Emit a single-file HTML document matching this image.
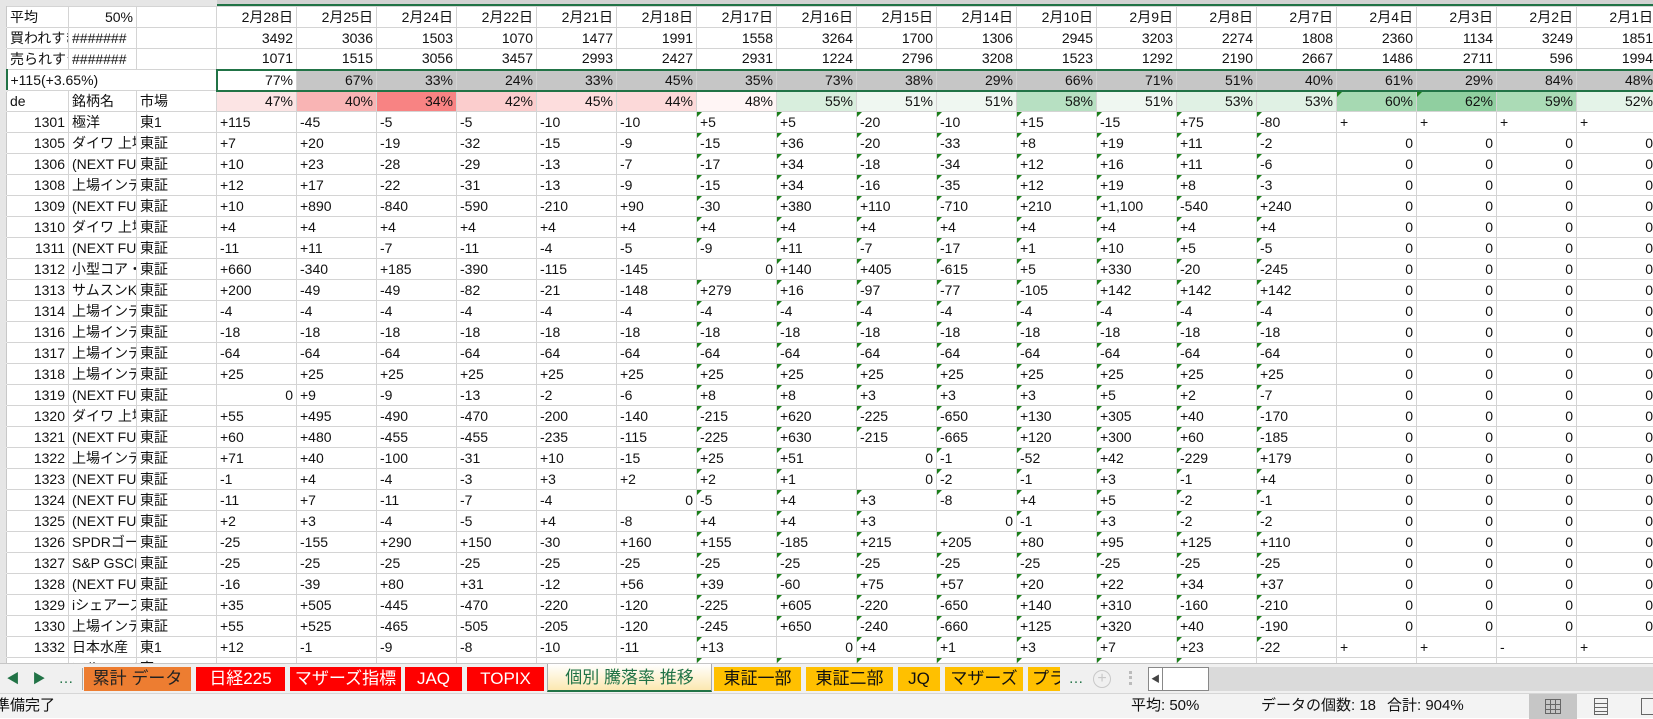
<!DOCTYPE html>
<html><head><meta charset="utf-8">
<style>
*{margin:0;padding:0;box-sizing:border-box}
body{width:1653px;height:718px;overflow:hidden;background:#fff;font-family:"Liberation Sans","Noto Sans CJK JP",sans-serif;font-size:14px;color:#111;position:relative}
#top{position:absolute;left:0;top:0;width:1653px;height:6px;background:#e6e6e6}
#top2{position:absolute;left:217px;top:0;width:1436px;height:6px;background:#d2d2d2;border-bottom:2px solid #217346}
#grid{position:absolute;left:0;top:6px;width:1653px;height:657px;overflow:hidden}
table{border-collapse:collapse;table-layout:fixed;width:1656px}
td{height:21px;border:1px solid #d4d4d4;padding:0 3px;white-space:nowrap;overflow:hidden;line-height:19px;text-align:left;position:relative}
td.h{background:#e6e6e6;border-color:#e6e6e6 #c8c8c8 #e6e6e6 #e6e6e6;padding:0}
td.r{text-align:right}
td.c{border-left:1px solid #9a9a9a}
td.t::before{content:"";position:absolute;left:0;top:0;border-top:5px solid #1a7f1a;border-right:5px solid transparent}
tr.sel td{background:#c6c6c6;text-align:right;border-top:2px solid #217346;border-bottom:2px solid #217346}
tr.sel td.w{background:#fff}
tr.sel td.h{background:#e6e6e6;border-right:2px solid #217346;border-top-color:#e6e6e6;border-bottom-color:#e6e6e6}
tr.sel td.a{background:#fff;text-align:left;border-top:1px solid #d4d4d4;border-bottom:1px solid #d4d4d4}
#tabs{position:absolute;left:0;top:663px;width:1653px;height:30px;background:#f0f0f0;border-top:1px solid #c6c6c6}
.tab{position:absolute;top:3px;height:24px;font-size:17px;line-height:24px;text-align:center;white-space:nowrap;overflow:hidden}
#status{position:absolute;left:0;top:693px;width:1653px;height:25px;background:#f3f3f3;border-top:1px solid #d6d6d6;font-size:15px;line-height:24px}
#status span{position:absolute}
</style></head><body>
<div id="top"></div><div id="top2"></div>
<div id="grid"><table>
<colgroup><col style="width:6px"><col style="width:62px"><col style="width:68px"><col style="width:80px"><col span="18" style="width:80px"></colgroup>
<tr><td class="h"></td><td>平均</td><td class="r">50%</td><td></td><td class="r c">2月28日</td><td class="r">2月25日</td><td class="r">2月24日</td><td class="r">2月22日</td><td class="r">2月21日</td><td class="r">2月18日</td><td class="r">2月17日</td><td class="r">2月16日</td><td class="r">2月15日</td><td class="r">2月14日</td><td class="r">2月10日</td><td class="r">2月9日</td><td class="r">2月8日</td><td class="r">2月7日</td><td class="r">2月4日</td><td class="r">2月3日</td><td class="r">2月2日</td><td class="r">2月1日</td></tr>
<tr><td class="h"></td><td>買われすぎ</td><td>#######</td><td></td><td class="r c">3492</td><td class="r">3036</td><td class="r">1503</td><td class="r">1070</td><td class="r">1477</td><td class="r">1991</td><td class="r">1558</td><td class="r">3264</td><td class="r">1700</td><td class="r">1306</td><td class="r">2945</td><td class="r">3203</td><td class="r">2274</td><td class="r">1808</td><td class="r">2360</td><td class="r">1134</td><td class="r">3249</td><td class="r">1851</td></tr>
<tr><td class="h"></td><td>売られすぎ</td><td>#######</td><td></td><td class="r c">1071</td><td class="r">1515</td><td class="r">3056</td><td class="r">3457</td><td class="r">2993</td><td class="r">2427</td><td class="r">2931</td><td class="r">1224</td><td class="r">2796</td><td class="r">3208</td><td class="r">1523</td><td class="r">1292</td><td class="r">2190</td><td class="r">2667</td><td class="r">1486</td><td class="r">2711</td><td class="r">596</td><td class="r">1994</td></tr>
<tr class="sel"><td class="h"></td><td class="a" colspan="3" style="overflow:visible">+115(+3.65%)</td><td class="w" style="border-left:2px solid #217346">77%</td><td>67%</td><td>33%</td><td>24%</td><td>33%</td><td>45%</td><td>35%</td><td>73%</td><td>38%</td><td>29%</td><td>66%</td><td>71%</td><td>51%</td><td>40%</td><td>61%</td><td>29%</td><td>84%</td><td>48%</td></tr>
<tr><td class="h"></td><td>de</td><td>銘柄名</td><td>市場</td><td class="r c" style="background:#fce4e4">47%</td><td class="r" style="background:#f9b4b4">40%</td><td class="r" style="background:#f88383">34%</td><td class="r" style="background:#fbcdcd">42%</td><td class="r" style="background:#fddddd">45%</td><td class="r" style="background:#fcd9d9">44%</td><td class="r" style="background:#fff5f5">48%</td><td class="r" style="background:#d8eedd">55%</td><td class="r" style="background:#eff7f1">51%</td><td class="r" style="background:#eff7f1">51%</td><td class="r" style="background:#b7e0c2">58%</td><td class="r" style="background:#eff7f1">51%</td><td class="r" style="background:#e0f1e4">53%</td><td class="r" style="background:#e0f1e4">53%</td><td class="r t" style="background:#a6d9b2">60%</td><td class="r t" style="background:#90cfa0">62%</td><td class="r" style="background:#abdbb6">59%</td><td class="r" style="background:#e4f3e8">52%</td></tr>
<tr><td class="h"></td><td class="r">1301</td><td>極洋</td><td>東1</td><td class="c">+115</td><td>-45</td><td>-5</td><td>-5</td><td>-10</td><td>-10</td><td class="t">+5</td><td class="t">+5</td><td class="t">-20</td><td class="t">-10</td><td class="t">+15</td><td class="t">-15</td><td class="t">+75</td><td class="t">-80</td><td>+</td><td>+</td><td>+</td><td>+</td></tr>
<tr><td class="h"></td><td class="r">1305</td><td>ダイワ 上場</td><td>東証</td><td class="c">+7</td><td>+20</td><td>-19</td><td>-32</td><td>-15</td><td>-9</td><td class="t">-15</td><td class="t">+36</td><td class="t">-20</td><td class="t">-33</td><td class="t">+8</td><td class="t">+19</td><td class="t">+11</td><td class="t">-2</td><td class="r">0</td><td class="r">0</td><td class="r">0</td><td class="r">0</td></tr>
<tr><td class="h"></td><td class="r">1306</td><td>(NEXT FUNDS</td><td>東証</td><td class="c">+10</td><td>+23</td><td>-28</td><td>-29</td><td>-13</td><td>-7</td><td class="t">-17</td><td class="t">+34</td><td class="t">-18</td><td class="t">-34</td><td class="t">+12</td><td class="t">+16</td><td class="t">+11</td><td class="t">-6</td><td class="r">0</td><td class="r">0</td><td class="r">0</td><td class="r">0</td></tr>
<tr><td class="h"></td><td class="r">1308</td><td>上場インデ</td><td>東証</td><td class="c">+12</td><td>+17</td><td>-22</td><td>-31</td><td>-13</td><td>-9</td><td class="t">-15</td><td class="t">+34</td><td class="t">-16</td><td class="t">-35</td><td class="t">+12</td><td class="t">+19</td><td class="t">+8</td><td class="t">-3</td><td class="r">0</td><td class="r">0</td><td class="r">0</td><td class="r">0</td></tr>
<tr><td class="h"></td><td class="r">1309</td><td>(NEXT FUNDS</td><td>東証</td><td class="c">+10</td><td>+890</td><td>-840</td><td>-590</td><td>-210</td><td>+90</td><td class="t">-30</td><td class="t">+380</td><td class="t">+110</td><td class="t">-710</td><td class="t">+210</td><td class="t">+1,100</td><td class="t">-540</td><td class="t">+240</td><td class="r">0</td><td class="r">0</td><td class="r">0</td><td class="r">0</td></tr>
<tr><td class="h"></td><td class="r">1310</td><td>ダイワ 上場</td><td>東証</td><td class="c">+4</td><td>+4</td><td>+4</td><td>+4</td><td>+4</td><td>+4</td><td class="t">+4</td><td class="t">+4</td><td class="t">+4</td><td class="t">+4</td><td class="t">+4</td><td class="t">+4</td><td class="t">+4</td><td class="t">+4</td><td class="r">0</td><td class="r">0</td><td class="r">0</td><td class="r">0</td></tr>
<tr><td class="h"></td><td class="r">1311</td><td>(NEXT FUNDS</td><td>東証</td><td class="c">-11</td><td>+11</td><td>-7</td><td>-11</td><td>-4</td><td>-5</td><td class="t">-9</td><td class="t">+11</td><td class="t">-7</td><td class="t">-17</td><td class="t">+1</td><td class="t">+10</td><td class="t">+5</td><td class="t">-5</td><td class="r">0</td><td class="r">0</td><td class="r">0</td><td class="r">0</td></tr>
<tr><td class="h"></td><td class="r">1312</td><td>小型コア・</td><td>東証</td><td class="c">+660</td><td>-340</td><td>+185</td><td>-390</td><td>-115</td><td>-145</td><td class="r">0</td><td class="t">+140</td><td class="t">+405</td><td class="t">-615</td><td class="t">+5</td><td class="t">+330</td><td class="t">-20</td><td class="t">-245</td><td class="r">0</td><td class="r">0</td><td class="r">0</td><td class="r">0</td></tr>
<tr><td class="h"></td><td class="r">1313</td><td>サムスンKODEX</td><td>東証</td><td class="c">+200</td><td>-49</td><td>-49</td><td>-82</td><td>-21</td><td>-148</td><td class="t">+279</td><td class="t">+16</td><td class="t">-97</td><td class="t">-77</td><td class="t">-105</td><td class="t">+142</td><td class="t">+142</td><td class="t">+142</td><td class="r">0</td><td class="r">0</td><td class="r">0</td><td class="r">0</td></tr>
<tr><td class="h"></td><td class="r">1314</td><td>上場インデ</td><td>東証</td><td class="c">-4</td><td>-4</td><td>-4</td><td>-4</td><td>-4</td><td>-4</td><td class="t">-4</td><td class="t">-4</td><td class="t">-4</td><td class="t">-4</td><td class="t">-4</td><td class="t">-4</td><td class="t">-4</td><td class="t">-4</td><td class="r">0</td><td class="r">0</td><td class="r">0</td><td class="r">0</td></tr>
<tr><td class="h"></td><td class="r">1316</td><td>上場インデ</td><td>東証</td><td class="c">-18</td><td>-18</td><td>-18</td><td>-18</td><td>-18</td><td>-18</td><td class="t">-18</td><td class="t">-18</td><td class="t">-18</td><td class="t">-18</td><td class="t">-18</td><td class="t">-18</td><td class="t">-18</td><td class="t">-18</td><td class="r">0</td><td class="r">0</td><td class="r">0</td><td class="r">0</td></tr>
<tr><td class="h"></td><td class="r">1317</td><td>上場インデ</td><td>東証</td><td class="c">-64</td><td>-64</td><td>-64</td><td>-64</td><td>-64</td><td>-64</td><td class="t">-64</td><td class="t">-64</td><td class="t">-64</td><td class="t">-64</td><td class="t">-64</td><td class="t">-64</td><td class="t">-64</td><td class="t">-64</td><td class="r">0</td><td class="r">0</td><td class="r">0</td><td class="r">0</td></tr>
<tr><td class="h"></td><td class="r">1318</td><td>上場インデ</td><td>東証</td><td class="c">+25</td><td>+25</td><td>+25</td><td>+25</td><td>+25</td><td>+25</td><td class="t">+25</td><td class="t">+25</td><td class="t">+25</td><td class="t">+25</td><td class="t">+25</td><td class="t">+25</td><td class="t">+25</td><td class="t">+25</td><td class="r">0</td><td class="r">0</td><td class="r">0</td><td class="r">0</td></tr>
<tr><td class="h"></td><td class="r">1319</td><td>(NEXT FUNDS</td><td>東証</td><td class="r c">0</td><td>+9</td><td>-9</td><td>-13</td><td>-2</td><td>-6</td><td class="t">+8</td><td class="t">+8</td><td class="t">+3</td><td class="t">+3</td><td class="t">+3</td><td class="t">+5</td><td class="t">+2</td><td class="t">-7</td><td class="r">0</td><td class="r">0</td><td class="r">0</td><td class="r">0</td></tr>
<tr><td class="h"></td><td class="r">1320</td><td>ダイワ 上場</td><td>東証</td><td class="c">+55</td><td>+495</td><td>-490</td><td>-470</td><td>-200</td><td>-140</td><td class="t">-215</td><td class="t">+620</td><td class="t">-225</td><td class="t">-650</td><td class="t">+130</td><td class="t">+305</td><td class="t">+40</td><td class="t">-170</td><td class="r">0</td><td class="r">0</td><td class="r">0</td><td class="r">0</td></tr>
<tr><td class="h"></td><td class="r">1321</td><td>(NEXT FUNDS</td><td>東証</td><td class="c">+60</td><td>+480</td><td>-455</td><td>-455</td><td>-235</td><td>-115</td><td class="t">-225</td><td class="t">+630</td><td class="t">-215</td><td class="t">-665</td><td class="t">+120</td><td class="t">+300</td><td class="t">+60</td><td class="t">-185</td><td class="r">0</td><td class="r">0</td><td class="r">0</td><td class="r">0</td></tr>
<tr><td class="h"></td><td class="r">1322</td><td>上場インデ</td><td>東証</td><td class="c">+71</td><td>+40</td><td>-100</td><td>-31</td><td>+10</td><td>-15</td><td class="t">+25</td><td class="t">+51</td><td class="r">0</td><td class="t">-1</td><td class="t">-52</td><td class="t">+42</td><td class="t">-229</td><td class="t">+179</td><td class="r">0</td><td class="r">0</td><td class="r">0</td><td class="r">0</td></tr>
<tr><td class="h"></td><td class="r">1323</td><td>(NEXT FUNDS</td><td>東証</td><td class="c">-1</td><td>+4</td><td>-4</td><td>-3</td><td>+3</td><td>+2</td><td class="t">+2</td><td class="t">+1</td><td class="r">0</td><td class="t">-2</td><td class="t">-1</td><td class="t">+3</td><td class="t">-1</td><td class="t">+4</td><td class="r">0</td><td class="r">0</td><td class="r">0</td><td class="r">0</td></tr>
<tr><td class="h"></td><td class="r">1324</td><td>(NEXT FUNDS</td><td>東証</td><td class="c">-11</td><td>+7</td><td>-11</td><td>-7</td><td>-4</td><td class="r">0</td><td class="t">-5</td><td class="t">+4</td><td class="t">+3</td><td class="t">-8</td><td class="t">+4</td><td class="t">+5</td><td class="t">-2</td><td class="t">-1</td><td class="r">0</td><td class="r">0</td><td class="r">0</td><td class="r">0</td></tr>
<tr><td class="h"></td><td class="r">1325</td><td>(NEXT FUNDS</td><td>東証</td><td class="c">+2</td><td>+3</td><td>-4</td><td>-5</td><td>+4</td><td>-8</td><td class="t">+4</td><td class="t">+4</td><td class="t">+3</td><td class="r">0</td><td class="t">-1</td><td class="t">+3</td><td class="t">-2</td><td class="t">-2</td><td class="r">0</td><td class="r">0</td><td class="r">0</td><td class="r">0</td></tr>
<tr><td class="h"></td><td class="r">1326</td><td>SPDRゴールド</td><td>東証</td><td class="c">-25</td><td>-155</td><td>+290</td><td>+150</td><td>-30</td><td>+160</td><td class="t">+155</td><td class="t">-185</td><td class="t">+215</td><td class="t">+205</td><td class="t">+80</td><td class="t">+95</td><td class="t">+125</td><td class="t">+110</td><td class="r">0</td><td class="r">0</td><td class="r">0</td><td class="r">0</td></tr>
<tr><td class="h"></td><td class="r">1327</td><td>S&amp;P GSCI商</td><td>東証</td><td class="c">-25</td><td>-25</td><td>-25</td><td>-25</td><td>-25</td><td>-25</td><td class="t">-25</td><td class="t">-25</td><td class="t">-25</td><td class="t">-25</td><td class="t">-25</td><td class="t">-25</td><td class="t">-25</td><td class="t">-25</td><td class="r">0</td><td class="r">0</td><td class="r">0</td><td class="r">0</td></tr>
<tr><td class="h"></td><td class="r">1328</td><td>(NEXT FUNDS</td><td>東証</td><td class="c">-16</td><td>-39</td><td>+80</td><td>+31</td><td>-12</td><td>+56</td><td class="t">+39</td><td class="t">-60</td><td class="t">+75</td><td class="t">+57</td><td class="t">+20</td><td class="t">+22</td><td class="t">+34</td><td class="t">+37</td><td class="r">0</td><td class="r">0</td><td class="r">0</td><td class="r">0</td></tr>
<tr><td class="h"></td><td class="r">1329</td><td>iシェアーズ</td><td>東証</td><td class="c">+35</td><td>+505</td><td>-445</td><td>-470</td><td>-220</td><td>-120</td><td class="t">-225</td><td class="t">+605</td><td class="t">-220</td><td class="t">-650</td><td class="t">+140</td><td class="t">+310</td><td class="t">-160</td><td class="t">-210</td><td class="r">0</td><td class="r">0</td><td class="r">0</td><td class="r">0</td></tr>
<tr><td class="h"></td><td class="r">1330</td><td>上場インデ</td><td>東証</td><td class="c">+55</td><td>+525</td><td>-465</td><td>-505</td><td>-205</td><td>-120</td><td class="t">-245</td><td class="t">+650</td><td class="t">-240</td><td class="t">-660</td><td class="t">+125</td><td class="t">+320</td><td class="t">+40</td><td class="t">-190</td><td class="r">0</td><td class="r">0</td><td class="r">0</td><td class="r">0</td></tr>
<tr><td class="h"></td><td class="r">1332</td><td>日本水産</td><td>東1</td><td class="c">+12</td><td>-1</td><td>-9</td><td>-8</td><td>-10</td><td>-11</td><td class="t">+13</td><td class="r">0</td><td class="t">+4</td><td class="t">+1</td><td class="t">+3</td><td class="t">+7</td><td class="t">+23</td><td class="t">-22</td><td>+</td><td>+</td><td>-</td><td>+</td></tr>
<tr><td class="h"></td><td class="r">1333</td><td>マルハニチロ</td><td>東1</td><td class="c">+20</td><td>-20</td><td>-20</td><td>-20</td><td>-20</td><td>-10</td><td class="t">+5</td><td class="t">-30</td><td class="t">+5</td><td class="t">+5</td><td class="t">-20</td><td class="t">-20</td><td class="t">+155</td><td class="r">0</td><td></td><td></td><td></td><td></td></tr>
</table></div>

<div id="tabs">
<span class="tab" style="left:5px;width:16px;color:#217346;font-size:13px">&#9664;</span>
<span class="tab" style="left:31px;width:16px;color:#217346;font-size:13px">&#9654;</span>
<span class="tab" style="left:56px;width:20px;color:#217346;font-size:15px">…</span>
<span style="position:absolute;left:82px;top:4px;width:1px;height:22px;background:#aaa"></span>
<span class="tab" style="left:84px;width:107px;background:#ED7D31;color:#222">累計 データ</span>
<span class="tab" style="left:196px;width:89px;background:#ff0000;color:#fff">日経225</span>
<span class="tab" style="left:290px;width:111px;background:#ff0000;color:#fff">マザーズ指標</span>
<span class="tab" style="left:405px;width:57px;background:#ff0000;color:#fff">JAQ</span>
<span class="tab" style="left:467px;width:77px;background:#ff0000;color:#fff">TOPIX</span>
<span class="tab" style="left:547px;width:165px;top:0;height:28px;line-height:28px;background:linear-gradient(#fff,#fce8b0);color:#217346;border-bottom:2px solid #217346;border-left:1px solid #aaa;border-right:1px solid #aaa">個別 騰落率 推移</span>
<span class="tab" style="left:714px;width:87px;background:#FFC000;color:#111">東証一部</span>
<span class="tab" style="left:806px;width:87px;background:#FFC000;color:#111">東証二部</span>
<span class="tab" style="left:898px;width:42px;background:#FFC000;color:#111">JQ</span>
<span class="tab" style="left:945px;width:78px;background:#FFC000;color:#111">マザーズ</span>
<span class="tab" style="left:1028px;width:32px;background:#FFC000;color:#111;text-align:left;padding-left:4px">プライム</span>
<span class="tab" style="left:1066px;width:20px;color:#217346;font-size:15px">…</span>
<span style="position:absolute;left:1093px;top:6px;width:18px;height:18px;border:1px solid #c8c8c8;border-radius:50%;color:#c8c8c8;font-size:16px;line-height:15px;text-align:center">+</span>
<span style="position:absolute;left:1129px;top:7px;width:3px;height:14px;border-left:3px dotted #bbb"></span>
<span style="position:absolute;left:1148px;top:3px;width:505px;height:24px;background:#dadada"></span>
<span style="position:absolute;left:1148px;top:3px;width:61px;height:24px;background:#fff;border:1px solid #888"></span>
<span style="position:absolute;left:1149px;top:4px;width:14px;height:22px;border-right:1px solid #888;font-size:9px;line-height:22px;text-align:center;color:#444">&#9664;</span>
</div>
<div id="status">
<span style="left:-5px">準備完了</span>
<span style="left:1131px">平均: 50%</span>
<span style="left:1261px">データの個数: 18</span>
<span style="left:1387px">合計: 904%</span>
<span style="left:1529px;top:0;width:48px;height:25px;background:#c6c6c6"></span>
<span style="left:1545px;top:5px;width:16px;height:15px;border:1px solid #666;background:linear-gradient(90deg,transparent 4px,#666 4px,#666 5px,transparent 5px,transparent 9px,#666 9px,#666 10px,transparent 10px),linear-gradient(transparent 4px,#666 4px,#666 5px,transparent 5px,transparent 9px,#666 9px,#666 10px,transparent 10px)"></span>
<span style="left:1594px;top:4px;width:14px;height:17px;border:1px solid #666;background:linear-gradient(transparent 4px,#666 4px,#666 5px,transparent 5px,transparent 8px,#666 8px,#666 9px,transparent 9px,transparent 12px,#666 12px,#666 13px,transparent 13px)"></span>
<span style="left:1641px;top:4px;width:14px;height:17px;border:1px solid #666"></span>
</div>
</body></html>
